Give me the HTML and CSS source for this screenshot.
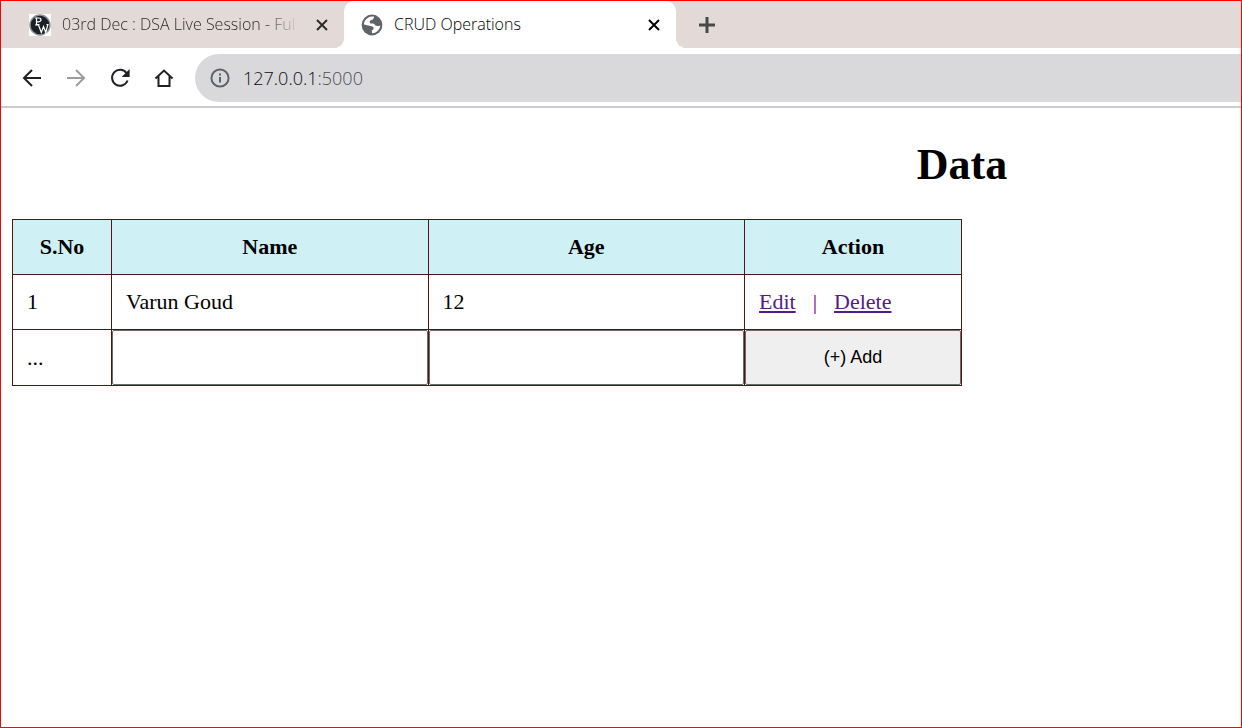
FILE: index.html
```html
<!DOCTYPE html>
<html lang="en">
<head>
<meta charset="utf-8">
<meta name="viewport" content="width=device-width, initial-scale=1">
<title>CRUD Operations</title>
<link rel="stylesheet" href="styles.css">
</head>
<body>
<div class="browser">
  <header>
    <div class="tab-strip">
      <div class="tab tab-inactive">
        <svg class="favicon" viewBox="0 0 22 22" aria-hidden="true">
          <path fill="#fff" d="M0 0h22v22H0z"/>
          <circle cx="11" cy="11" r="10" fill="#182126" stroke="#8d9194" stroke-width="1.4"/>
          <path fill="none" stroke="#fff" stroke-width="1.2" d="M7.500 11V3.800M6 4h3.500q2.500 0 2.500 1.800t-2.500 2H7.500M6 11h3M8 10.500h2.500M9.300 10.500l3 8 2.200-6 2.200 6 2.200-8M17.400 10.500h2.200"/>
        </svg>
        <span class="tab-title tab-title-fade">03rd Dec : DSA Live Session - Ful</span>
        <button class="tab-close" type="button" aria-label="Close DSA Live Session tab">
          <svg viewBox="0 0 12 12"><path d="M1 1l10 10M11 1L1 11"/></svg>
        </button>
      </div>
      <div class="tab tab-active">
        <svg class="favicon" viewBox="0 0 22 22" aria-hidden="true">
          <circle cx="11" cy="11" r="10.400" fill="#5f6368"/>
          <path fill="#fff" d="M13.200 2.800c-1 2.300-.9 3.200-3.200 3.400-1.200.1-1.400 1-1.200 2.300.2.900 1 1.100 2.800 1.100 2.300 0 2.200 1.800 3.300 2.200 1.200.4 3-.3 4.400-.1-.5 3.600-3.500 7.200-7.800 7.500-1-.3-.5-1.800-.8-2.600 1.300-.4 2.100-1.300 2-2.500-.1-1.500-1.200-1.900-3.600-2.200-2.300-.3-4-1-6.300-1.300.3-3.400 2.100-5.900 4.600-7.200 1.600-.8 4-1.200 5.800-.6z"/>
        </svg>
        <span class="tab-title">CRUD Operations</span>
        <button class="tab-close" type="button" aria-label="Close CRUD Operations tab">
          <svg viewBox="0 0 12 12"><path d="M1 1l10 10M11 1L1 11"/></svg>
        </button>
      </div>
      <button class="new-tab" type="button" aria-label="New tab">
        <svg viewBox="0 0 18 18"><path d="M9 1v16M1 9h16"/></svg>
      </button>
    </div>
    <nav class="toolbar" aria-label="Browser">
      <button class="tool" type="button" aria-label="Back">
        <svg viewBox="0 0 20 20"><path d="M19 10H2M10 2l-8 8 8 8"/></svg>
      </button>
      <button class="tool tool-off" type="button" aria-label="Forward">
        <svg viewBox="0 0 20 20"><path d="M1 10h17M10 2l8 8-8 8"/></svg>
      </button>
      <button class="tool" type="button" aria-label="Reload">
        <svg viewBox="0 0 20 20"><path d="M16.500 5A8 8 0 1 0 17.600 12.500"/><path class="solid" d="M19.600 1v8h-8z"/></svg>
      </button>
      <button class="tool" type="button" aria-label="Home">
        <svg viewBox="0 0 20 20"><path d="M1.500 10.500L10 2.500l8.500 8M4.500 8.500V18h11V8.500"/></svg>
      </button>
      <div class="address">
        <svg class="info" viewBox="0 0 20 20" aria-hidden="true"><circle cx="10" cy="10" r="8.600"/><path d="M10 9v5.500M10 5.500v2"/></svg>
        <span class="host">127.0.0.1<span class="port">:5000</span></span>
      </div>
    </nav>
  </header>
  <main class="page">
    <h1 class="title">Data</h1>
    <form>
      <table class="records">
        <colgroup><col class="col-number"><col class="col-field"><col class="col-field"><col class="col-action"></colgroup>
        <thead>
          <tr><th scope="col">S.No</th><th scope="col">Name</th><th scope="col">Age</th><th scope="col">Action</th></tr>
        </thead>
        <tbody>
          <tr>
            <td>1</td><td>Varun Goud</td><td>12</td>
            <td><div class="actions"><a href="#edit">Edit</a><span>|</span><a href="#delete">Delete</a></div></td>
          </tr>
          <tr>
            <td>...</td>
            <td class="control"><input class="field" type="text" aria-label="Name"></td>
            <td class="control"><input class="field" type="text" aria-label="Age"></td>
            <td class="control"><button class="add" type="button">(+) Add</button></td>
          </tr>
        </tbody>
      </table>
    </form>
  </main>
</div>
</body>
</html>
```
FILE: styles.css
```css
* {
  box-sizing: border-box;
}

body {
  margin: 0;
  background: #fff;
  color: #000;
  font-family: "Liberation Serif", "Times New Roman", serif;
  font-size: 22px;
}

.browser {
  min-height: 100vh;
  border: 1px solid #f00;
}

button {
  padding: 0;
  border: 0;
  background: none;
}

svg {
  display: block;
  flex: none;
}

.tab-strip {
  display: flex;
  height: 47px;
  background: #e3dad7;
  font-family: "Open Sans", sans-serif;
  font-size: 16px;
  font-weight: 300;
}

.tab {
  display: flex;
  align-items: center;
  gap: 11px;
  padding-right: 16px;
}

.tab-inactive {
  width: 343px;
  padding-left: 28px;
  border-bottom-right-radius: 10px;
  color: #2e2b29;
}

.tab-active {
  position: relative;
  width: 332px;
  padding-left: 17px;
  border-radius: 10px 10px 0 0;
  background: #fff;
  color: #000;
}

.tab-active::before,
.tab-active::after {
  content: "";
  position: absolute;
  bottom: 0;
  width: 10px;
  height: 10px;
}

.tab-active::before {
  right: 100%;
  background: radial-gradient(circle at 0 0, transparent 10px, #fff 10px);
}

.tab-active::after {
  left: 100%;
  background: radial-gradient(circle at 100% 0, transparent 10px, #fff 10px);
}

.favicon {
  width: 22px;
  height: 22px;
}

.tab-title {
  flex: 1;
  padding-bottom: 2px;
  white-space: nowrap;
}

.tab-title-fade {
  mask-image: linear-gradient(to right, #000 85%, transparent);
}

.tab-close svg {
  width: 12px;
  height: 12px;
}

.tab-close,
.new-tab {
  padding: 0 0 0 5px;
  color: inherit;
}

.tab-close path,
.new-tab path {
  fill: none;
  stroke: currentColor;
  stroke-width: 2;
}

.new-tab {
  margin-left: 17px;
  color: #46484a;
}

.new-tab svg {
  width: 18px;
  height: 18px;
}

.new-tab path {
  stroke-width: 3;
}

.toolbar {
  display: flex;
  align-items: center;
  gap: 24px;
  height: 60px;
  padding: 2px 0 0 21px;
  border-bottom: 2px solid #ccc;
}

.tool {
  color: #202124;
}

.tool svg {
  width: 20px;
  height: 20px;
}

.tool path {
  fill: none;
  stroke: currentColor;
  stroke-width: 2;
}

.tool .solid {
  fill: currentColor;
  stroke: none;
}

.tool-off {
  color: #9c9c9c;
}

.address {
  display: flex;
  flex: 1;
  align-items: center;
  gap: 13px;
  height: 48px;
  margin-left: -3px;
  padding-left: 15px;
  border-radius: 24px 0 0 24px;
  background: #d9d9dc;
  color: #0c0c10;
  font-family: "Open Sans", sans-serif;
  font-size: 18px;
  font-weight: 300;
}

.info {
  width: 20px;
  height: 20px;
  fill: none;
  stroke: #5f6368;
  stroke-width: 2;
}

.port {
  color: #4a4e54;
}

.page {
  padding: 32px 11px;
}

.title {
  margin: 0 0 29px;
  padding-left: 56%;
  font-size: 44px;
  line-height: 50px;
  text-align: center;
}

.records {
  width: 100%;
  max-width: 950px;
  border-collapse: collapse;
  table-layout: fixed;
}

.col-number {
  width: 99px;
}

.col-action {
  width: 217px;
}

.records th,
.records td {
  height: 55px;
  padding: 0 14px;
  border: 1px solid #4b1717;
}

.records th {
  background: #cff0f4;
}

.records .control {
  padding: 0;
}

.actions {
  display: flex;
  gap: 17px;
  color: #800080;
}

.actions a {
  color: #551a8b;
}

.field,
.add {
  display: block;
  width: 100%;
  height: 55px;
  border: 1px solid #6b6b6b;
  border-radius: 2px;
  font-family: "Liberation Sans", Arial, sans-serif;
  font-size: 18px;
}

.field {
  padding: 0 14px;
}

.add {
  background: #efefef;
}
```
